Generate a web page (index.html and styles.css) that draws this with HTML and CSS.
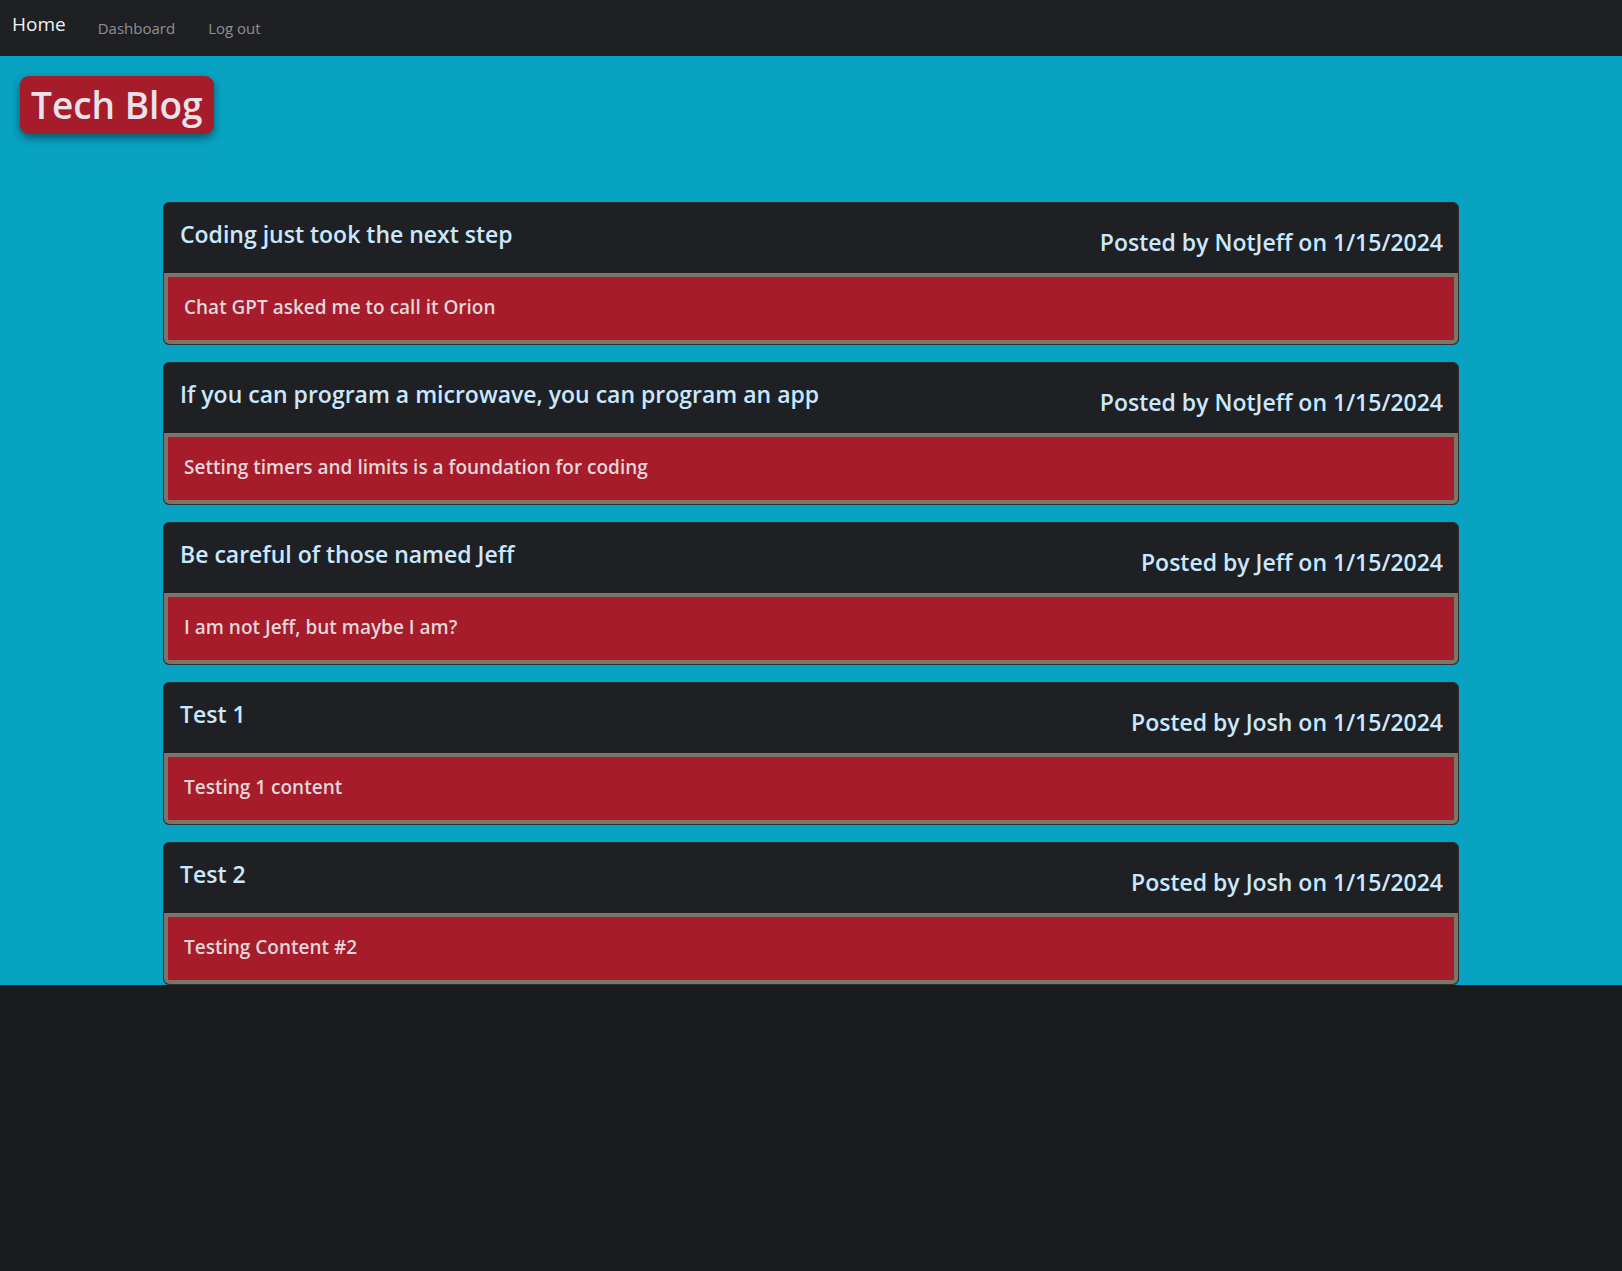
FILE: index.html
```html
<!DOCTYPE html>
<html lang="en">
<head>
<meta charset="utf-8">
<title>Tech Blog</title>
<link rel="stylesheet" href="styles.css">
</head>
<body>
<nav class="navbar">
  <a class="brand" href="#">Home</a>
  <a class="nav-link" href="#">Dashboard</a>
  <a class="nav-link" href="#">Log out</a>
</nav>
<main class="hero">
  <h1 class="site-title">Tech Blog</h1>
  <section class="posts">
    <article class="post">
      <header class="post-head">
        <h2 class="post-title">Coding just took the next step</h2>
        <p class="post-meta">Posted by NotJeff on 1/15/2024</p>
      </header>
      <div class="post-body">Chat GPT asked me to call it Orion</div>
    </article>
    <article class="post">
      <header class="post-head">
        <h2 class="post-title">If you can program a microwave, you can program an app</h2>
        <p class="post-meta">Posted by NotJeff on 1/15/2024</p>
      </header>
      <div class="post-body">Setting timers and limits is a foundation for coding</div>
    </article>
    <article class="post">
      <header class="post-head">
        <h2 class="post-title">Be careful of those named Jeff</h2>
        <p class="post-meta">Posted by Jeff on 1/15/2024</p>
      </header>
      <div class="post-body">I am not Jeff, but maybe I am?</div>
    </article>
    <article class="post">
      <header class="post-head">
        <h2 class="post-title">Test 1</h2>
        <p class="post-meta">Posted by Josh on 1/15/2024</p>
      </header>
      <div class="post-body">Testing 1 content</div>
    </article>
    <article class="post">
      <header class="post-head">
        <h2 class="post-title">Test 2</h2>
        <p class="post-meta">Posted by Josh on 1/15/2024</p>
      </header>
      <div class="post-body">Testing Content #2</div>
    </article>
  </section>
</main>
</body>
</html>
```
FILE: styles.css
```css
* { box-sizing: border-box; }
html, body {
  margin: 0;
  padding: 0;
}
body {
  background: #1a1b1d;
  font-family: "Open Sans", "Noto Sans", "Liberation Sans", sans-serif;
  min-height: 1271px;
}
.navbar {
  height: 56px;
  background: #1f2023;
  display: flex;
  align-items: flex-start;
  padding: 0 0 0 12px;
}
.brand {
  color: #f2f2f2;
  text-decoration: none;
  font-size: 19px;
  line-height: 24px;
  padding-top: 12px;
  margin-right: 32px;
}
.nav-link {
  color: #8f9092;
  text-decoration: none;
  font-size: 15px;
  line-height: 20px;
  padding-top: 18px;
  margin-right: 33px;
}
.hero {
  background: #08a2c2;
  padding: 20px 0 0;
}
.site-title {
  display: inline-block;
  margin: 0 0 0 20px;
  background: #a61c2a;
  color: #ebe1ea;
  font-size: 37px;
  font-weight: 600;
  line-height: 58px;
  height: 58px;
  padding: 0 11px;
  border-radius: 9px;
  box-shadow: 0 4px 8px rgba(0, 0, 0, 0.45);
}
.posts {
  width: 1296px;
  margin: 68px auto 0;
  display: flex;
  flex-direction: column;
  gap: 17px;
}
.post {
  border: 1px solid #2e2f33;
  border-radius: 6px;
  overflow: hidden;
  background: #1f2023;
}
.post-head {
  height: 70px;
  display: flex;
  justify-content: space-between;
  align-items: flex-start;
  padding: 0 15px 0 16px;
  color: #cae8fd;
}
.post-title {
  margin: 0;
  padding-top: 17px;
  font-size: 23px;
  line-height: 28px;
  font-weight: 600;
}
.post-meta {
  margin: 0;
  padding-top: 23px;
  font-size: 23px;
  line-height: 32px;
  font-weight: 600;
}
.post-body {
  height: 71px;
  background: #a61c2a;
  border: 4px solid #7c7467;
  border-radius: 0 0 5px 5px;
  color: #e2d6da;
  font-size: 19px;
  font-weight: 600;
  line-height: 26px;
  padding: 17px 15px 15px 16px;
}
```
